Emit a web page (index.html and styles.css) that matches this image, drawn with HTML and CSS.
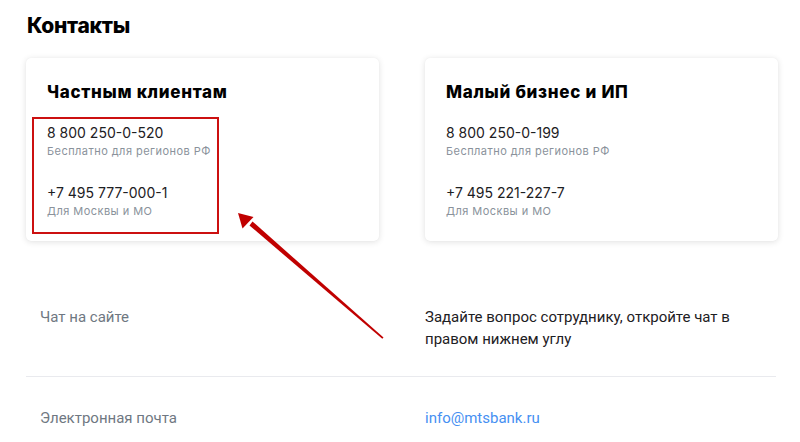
FILE: index.html
```html
<!DOCTYPE html>
<html lang="ru">
<head>
<meta charset="utf-8">
<link rel="stylesheet" href="styles.css">
</head>
<body>
<div class="page">
  <h1 class="title">Контакты</h1>
  <div class="cards">
    <div class="card">
      <h2 class="card-title">Частным клиентам</h2>
      <div class="phone">8 800 250-0-520</div>
      <div class="note">Бесплатно для регионов РФ</div>
      <div class="phone phone-second">+7 495 777-000-1</div>
      <div class="note">Для Москвы и МО</div>
      <div class="highlight"></div>
    </div>
    <div class="card">
      <h2 class="card-title">Малый бизнес и ИП</h2>
      <div class="phone">8 800 250-0-199</div>
      <div class="note">Бесплатно для регионов РФ</div>
      <div class="phone phone-second">+7 495 221-227-7</div>
      <div class="note">Для Москвы и МО</div>
    </div>
  </div>
  <div class="rows">
    <div class="row row-first">
      <div class="label">Чат на сайте</div>
      <div class="value">Задайте вопрос сотруднику, откройте чат в правом нижнем углу</div>
    </div>
    <div class="row">
      <div class="label">Электронная почта</div>
      <div class="value"><a class="link" href="#">info@mtsbank.ru</a></div>
    </div>
  </div>
  <svg class="arrow" width="800" height="442" viewBox="0 0 800 442">
    <polygon points="383.5,337.5 382.3,338.8 249.5,225.5 252.5,221.5" fill="#c00000"/>
    <polygon points="238,213 253.5,217 242.5,228.5" fill="#c00000"/>
  </svg>
</div>
</body>
</html>
```

FILE: styles.css
```css
* { box-sizing: border-box; }
html, body { margin: 0; padding: 0; background: #fff; }
body {
  width: 800px;
  height: 442px;
  overflow: hidden;
  font-family: Inter, "Noto Sans", sans-serif;
  color: #1d2023;
}
.page {
  position: relative;
  padding: 11px 24px 0 26px;
}
.title {
  margin: 0 0 0 1px;
  font-family: Inter, sans-serif;
  font-weight: 800;
  font-size: 21px;
  line-height: 30px;
  color: #000;
  letter-spacing: -0.3px;
}
.cards {
  display: grid;
  grid-template-columns: 353px 353px;
  column-gap: 46px;
  margin-top: 17px;
}
.card {
  position: relative;
  height: 183px;
  padding: 22px 21px 0 21px;
  background: #fff;
  border-radius: 5px;
  box-shadow: 0 1px 6px rgba(0, 0, 0, 0.12), 0 0 1px rgba(0, 0, 0, 0.06);
}
.card-title {
  margin: 0 0 19px 0;
  font-weight: 800;
  font-size: 17px;
  line-height: 24px;
  letter-spacing: 0.7px;
  color: #000;
}
.phone {
  font-size: 14px;
  line-height: 20px;
  color: #1d2023;
}
.phone-second { margin-top: 23px; }
.note {
  font-size: 11px;
  line-height: 17px;
  letter-spacing: 0.45px;
  color: #8a929b;
}
.highlight {
  position: absolute;
  left: 6px;
  top: 59px;
  width: 187px;
  height: 117px;
  border: 2px solid #cc1010;
}
.rows {
  margin-top: 35px;
  width: 750px;
  font-family: Roboto, sans-serif;
  font-size: 15px;
  line-height: 22px;
}
.row {
  display: grid;
  grid-template-columns: 399px 340px;
  padding: 30px 0 26px 0;
}
.row-first { border-bottom: 1px solid #e9eaee; }
.label {
  padding-left: 14px;
  color: #6f7882;
}
.value { color: #1d2023; }
.link { color: #4690f2; text-decoration: none; }
.arrow {
  position: absolute;
  left: 0;
  top: 0;
  pointer-events: none;
}
```
